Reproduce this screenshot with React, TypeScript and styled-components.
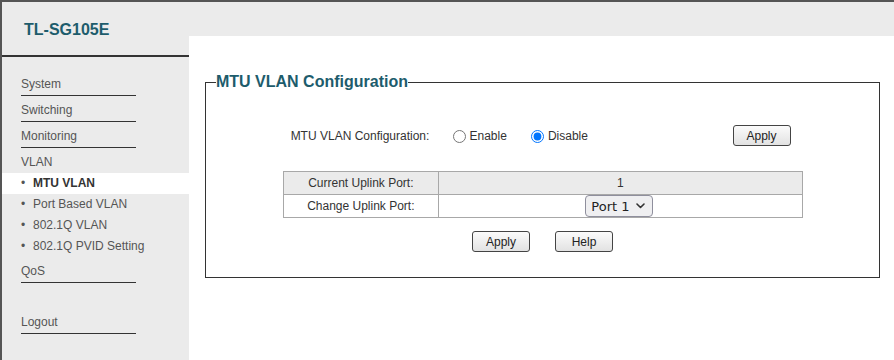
import React from 'react';
import styled, { createGlobalStyle } from 'styled-components';

const GlobalStyle = createGlobalStyle`
  html, body {
    margin: 0;
    padding: 0;
    background: #fff;
  }
  body {
    font-family: "Liberation Sans", Arial, sans-serif;
    font-size: 12px;
    color: #333;
  }
`;

const Frame = styled.div`
  display: flex;
  min-height: 100vh;
  box-sizing: border-box;
  border-top: 2px solid #555;
  border-left: 2px solid #555;
`;

const Sidebar = styled.aside`
  width: 187px;
  flex-shrink: 0;
  background: #ebebeb;
`;

const Logo = styled.div`
  height: 55px;
  box-sizing: border-box;
  padding: 19px 0 0 22px;
  border-bottom: 2px solid #333;
  font-size: 16px;
  line-height: 18px;
  font-weight: bold;
  color: #1d5c6c;
`;

const Menu = styled.nav`
  padding-top: 13px;
`;

const MenuItem = styled.div<{ $line?: boolean; $gap?: number }>`
  width: 115px;
  margin: ${(p) => p.$gap ?? 0}px 0 0 19px;
  padding: 6px 0 3px;
  line-height: 16px;
  color: #555;
  border-bottom: ${(p) => (p.$line ? '1px solid #333' : 'none')};
`;

const SubItem = styled.div<{ $active?: boolean }>`
  display: flex;
  height: 21px;
  line-height: 21px;
  padding-left: 19px;
  background: ${(p) => (p.$active ? '#fff' : 'transparent')};
  color: ${(p) => (p.$active ? '#333' : '#555')};
  font-weight: ${(p) => (p.$active ? 'bold' : 'normal')};
`;

const Bullet = styled.span`
  width: 12px;
  font-weight: normal;
  color: #555;
`;

const Main = styled.main`
  flex: 1;
  display: flex;
  flex-direction: column;
`;

const TopBand = styled.div`
  height: 34px;
  background: #ebebeb;
`;

const Content = styled.div`
  padding: 37px 14px 0 16px;
`;

const Panel = styled.fieldset`
  margin: 0;
  padding: 0 10px 25px;
  min-width: 0;
  border: 1px solid #333;
`;

const PanelTitle = styled.legend`
  margin: 0;
  padding: 0;
  font-size: 16px;
  line-height: 18px;
  font-weight: bold;
  color: #1d5c6c;
`;

const ConfigRow = styled.div`
  display: grid;
  grid-template-columns: 155px 1fr auto;
  align-items: center;
  width: 520px;
  height: 21px;
  margin: 34px auto 0;
`;

const RowLabel = styled.div`
  text-align: center;
  padding-top: 1px;
`;

const RadioGroup = styled.div`
  display: flex;
  align-items: center;
  padding: 1px 0 0 15px;
`;

const RadioLabel = styled.label`
  display: inline-flex;
  align-items: center;
  gap: 4px;
  margin-right: 24px;

  input {
    margin: 0;
    width: 13px;
    height: 13px;
  }
`;

const Button = styled.button<{ $right?: number }>`
  width: 58px;
  height: 21px;
  margin: 0 ${(p) => p.$right ?? 0}px 0 0;
  padding: 0;
  border: 1px solid #444;
  border-radius: 3px;
  background: linear-gradient(#fbfbfb, #e2e2e2);
  font-family: "Liberation Sans", Arial, sans-serif;
  font-size: 12px;
  color: #222;
`;

const Table = styled.table`
  width: 520px;
  margin: 25px auto 0;
  border-collapse: collapse;
  border: 1px solid #a8a8a8;
`;

const Cell = styled.td<{ $shade?: boolean }>`
  height: 22px;
  padding: 0;
  border: 1px solid #a8a8a8;
  text-align: center;
  vertical-align: middle;
  background: ${(p) => (p.$shade ? '#ebebeb' : '#fff')};
`;

const SelectBox = styled.span`
  display: inline-flex;
  align-items: center;
  box-sizing: border-box;
  width: 68px;
  height: 22px;
  margin-left: -2px;
  padding: 0 7px 0 5px;
  border: 1px solid #8f8f9d;
  border-radius: 4px;
  background: #efeff1;
  vertical-align: middle;

  svg {
    flex-shrink: 0;
    pointer-events: none;
  }
`;

const PortSelect = styled.select`
  appearance: none;
  flex: 1;
  min-width: 0;
  margin: 0;
  padding: 0;
  border: none;
  outline: none;
  background: transparent;
  font-family: "DejaVu Sans", sans-serif;
  font-size: 13px;
  color: #222;
`;

const Actions = styled.div`
  display: flex;
  justify-content: center;
  gap: 25px;
  margin-top: 13px;
`;

const topMenu = ['System', 'Switching', 'Monitoring'];
const vlanMenu = ['MTU VLAN', 'Port Based VLAN', '802.1Q VLAN', '802.1Q PVID Setting'];

export default function App() {
  return (
    <>
      <GlobalStyle />
      <Frame>
        <Sidebar>
          <Logo>TL-SG105E</Logo>
          <Menu>
            {topMenu.map((m) => (
              <MenuItem key={m} $line>
                {m}
              </MenuItem>
            ))}
            <MenuItem>VLAN</MenuItem>
            {vlanMenu.map((m, i) => (
              <SubItem key={m} $active={i === 0}>
                <Bullet>•</Bullet>
                {m}
              </SubItem>
            ))}
            <MenuItem $line>QoS</MenuItem>
            <MenuItem $line $gap={25}>
              Logout
            </MenuItem>
          </Menu>
        </Sidebar>
        <Main>
          <TopBand />
          <Content>
            <Panel>
              <PanelTitle>MTU VLAN Configuration</PanelTitle>
              <ConfigRow>
                <RowLabel>MTU VLAN Configuration:</RowLabel>
                <RadioGroup>
                  <RadioLabel>
                    <input type="radio" name="mtu" />
                    Enable
                  </RadioLabel>
                  <RadioLabel>
                    <input type="radio" name="mtu" defaultChecked />
                    Disable
                  </RadioLabel>
                </RadioGroup>
                <Button $right={12}>Apply</Button>
              </ConfigRow>
              <Table>
                <tbody>
                  <tr>
                    <Cell $shade style={{ width: '30%' }}>
                      Current Uplink Port:
                    </Cell>
                    <Cell $shade>1</Cell>
                  </tr>
                  <tr>
                    <Cell>Change Uplink Port:</Cell>
                    <Cell>
                      <SelectBox>
                        <PortSelect defaultValue="1">
                          {[1, 2, 3, 4, 5].map((n) => (
                            <option key={n} value={n}>
                              Port {n}
                            </option>
                          ))}
                        </PortSelect>
                        <svg width="9" height="6" viewBox="0 0 9 6">
                          <path
                            d="M1 1l3.5 3.5L8 1"
                            fill="none"
                            stroke="#333"
                            strokeWidth="1.6"
                            strokeLinecap="round"
                            strokeLinejoin="round"
                          />
                        </svg>
                      </SelectBox>
                    </Cell>
                  </tr>
                </tbody>
              </Table>
              <Actions>
                <Button>Apply</Button>
                <Button>Help</Button>
              </Actions>
            </Panel>
          </Content>
        </Main>
      </Frame>
    </>
  );
}
